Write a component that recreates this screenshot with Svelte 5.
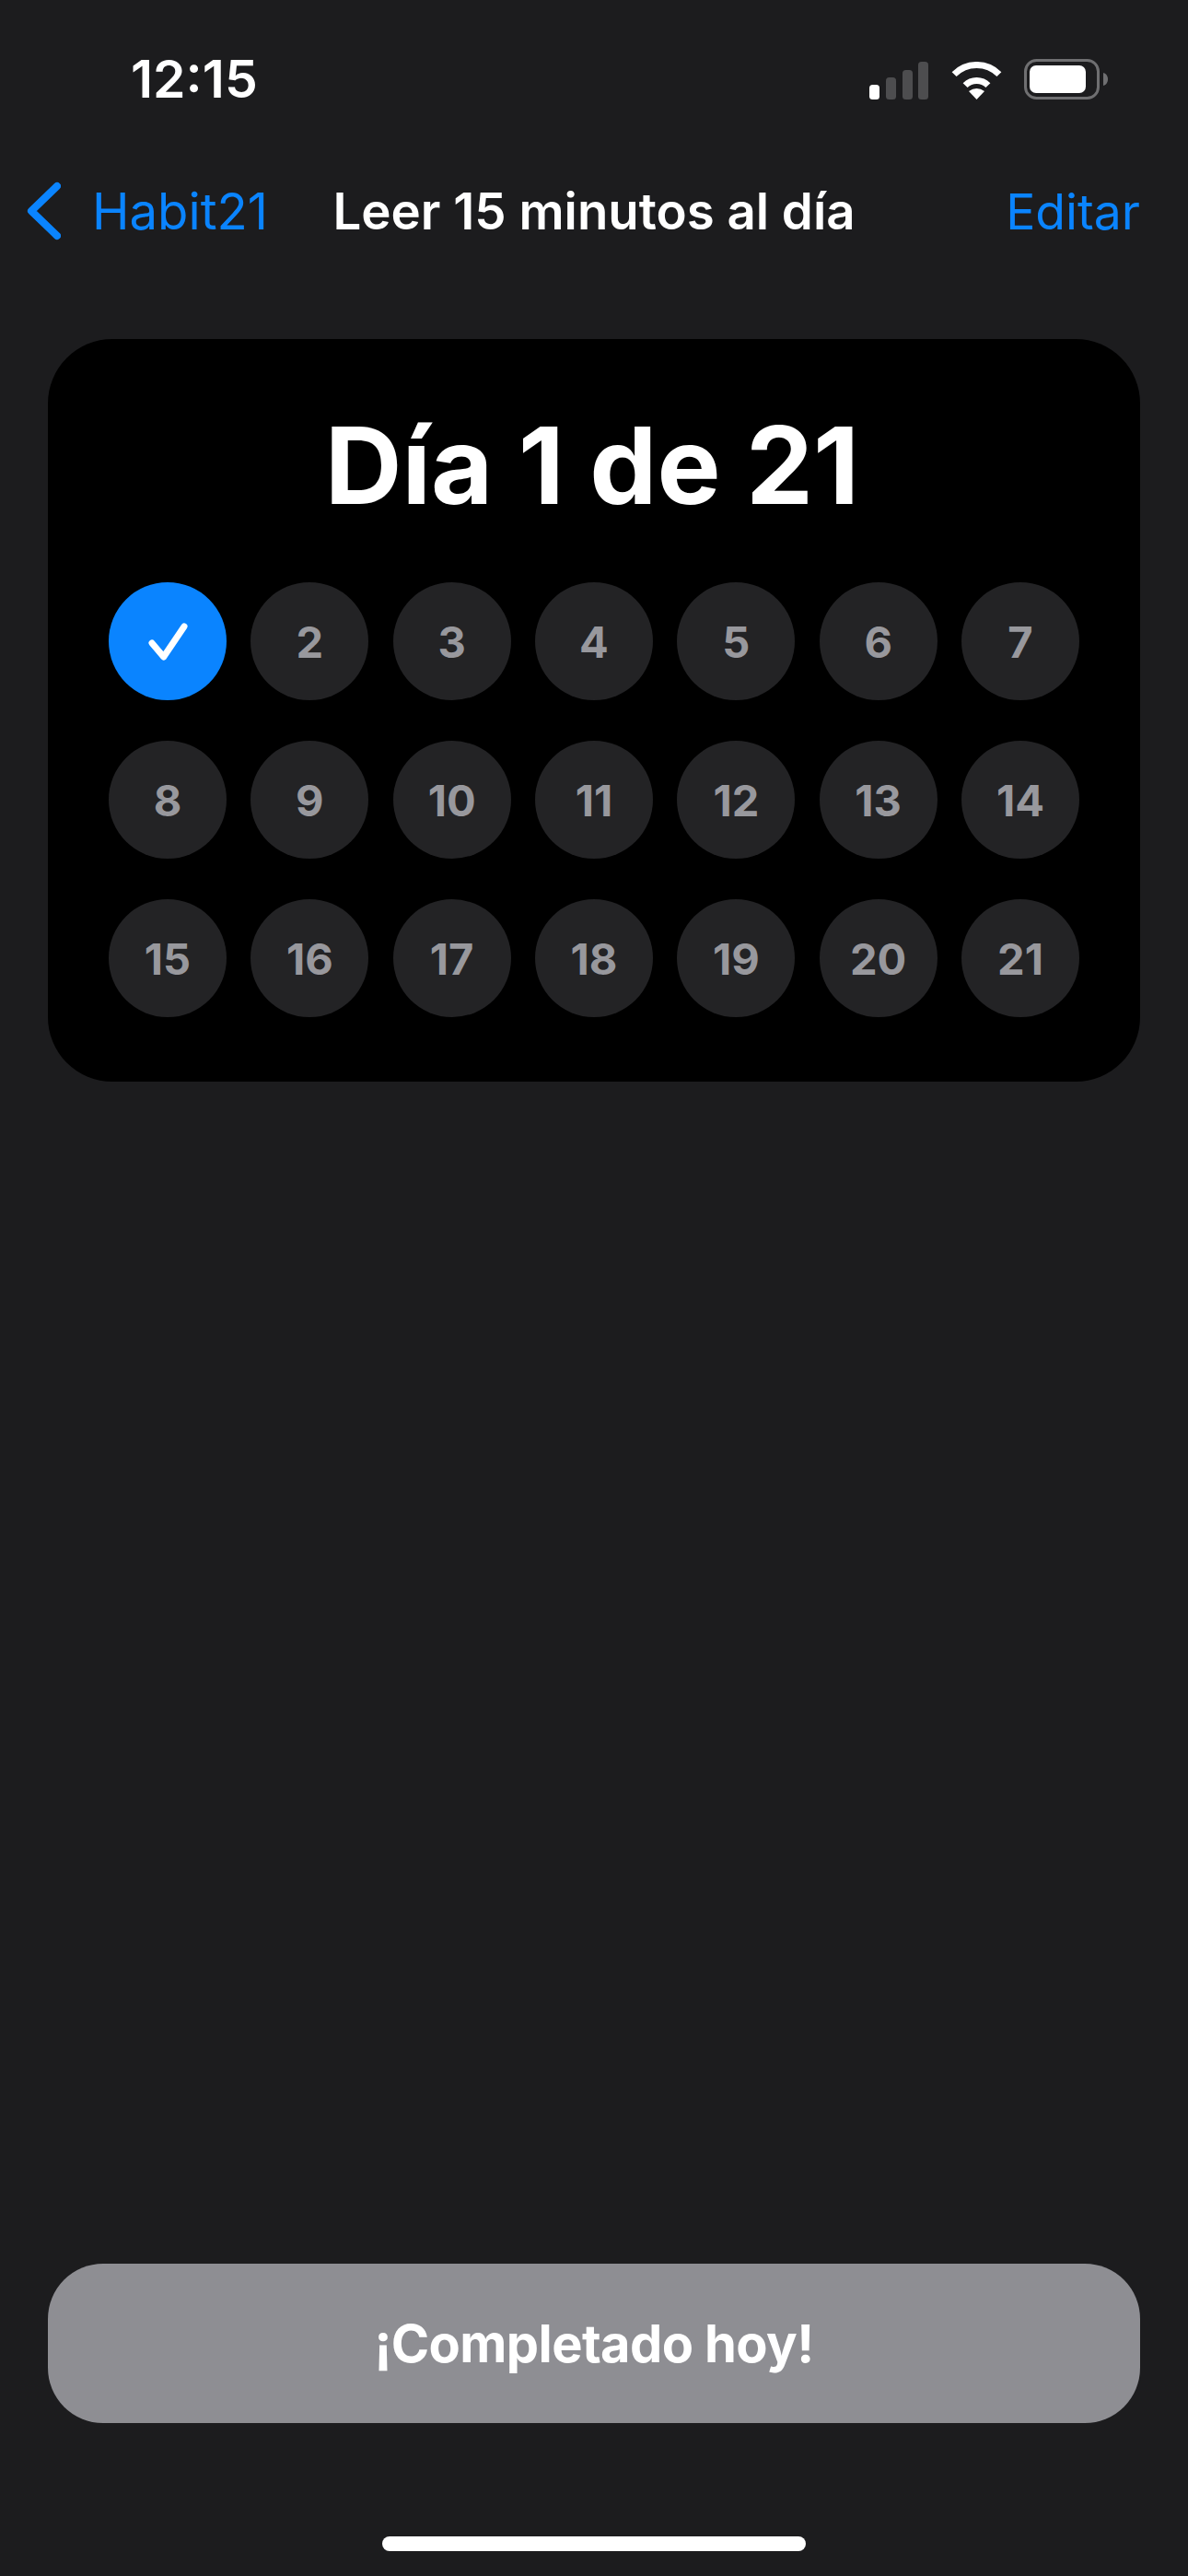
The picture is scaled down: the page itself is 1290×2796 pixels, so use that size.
<script>
  const days = Array.from({ length: 21 }, (_, i) => i + 1);
  let completed = 1;
</script>

<div class="screen">
  <div class="status">
    <span class="time">12:15</span>
    <div class="status-icons">
      <svg class="signal" width="64" height="41" viewBox="0 0 64 41">
        <rect x="0" y="25" width="11" height="16" rx="3.5" fill="#fff" />
        <rect x="18" y="17" width="11" height="24" rx="3.5" fill="#4d4d4f" />
        <rect x="36" y="9" width="11" height="32" rx="3.5" fill="#4d4d4f" />
        <rect x="53" y="0" width="11" height="41" rx="3.5" fill="#4d4d4f" />
      </svg>
      <svg class="wifi" width="55" height="41" viewBox="0 0 55 41">
        <path d="M3.1 13.6A34.5 34.5 0 0 1 51.9 13.6" fill="none" stroke="#fff" stroke-width="7" />
        <path d="M15.1 25.6A17.5 17.5 0 0 1 39.9 25.6" fill="none" stroke="#fff" stroke-width="7" />
        <path d="M27.5 41L19 32Q27.5 26 36 32Z" fill="#fff" />
      </svg>
      <svg class="battery" width="92" height="44" viewBox="0 0 92 44">
        <rect x="1.5" y="1.5" width="79" height="41" rx="12" fill="none" stroke="#6f6f71" stroke-width="3" />
        <rect x="6" y="7" width="61" height="30" rx="7" fill="#fff" />
        <path d="M86 15C89.5 16 91 19 91 22C91 25 89.5 28 86 29Z" fill="#6f6f71" />
      </svg>
    </div>
  </div>

  <nav class="nav">
    <a class="back" href="#back">
      <svg width="38" height="64" viewBox="0 0 38 64">
        <path d="M34 5L6 32L34 59" fill="none" stroke="#0a84ff" stroke-width="8" stroke-linecap="round" stroke-linejoin="round" />
      </svg>
      <span>Habit21</span>
    </a>
    <h1>Leer 15 minutos al día</h1>
    <a class="edit" href="#edit">Editar</a>
  </nav>

  <section class="card">
    <h2>Día 1 de 21</h2>
    <div class="days">
      {#each days as day}
        <div class="day" class:done={day <= completed}>
          {#if day <= completed}
            <svg width="48" height="44" viewBox="0 0 48 44">
              <path d="M7 24L19.7 39L42 6" fill="none" stroke="#fff" stroke-width="7" stroke-linecap="round" stroke-linejoin="round" />
            </svg>
          {:else}
            {day}
          {/if}
        </div>
      {/each}
    </div>
  </section>

  <div class="spacer"></div>

  <button class="complete" type="button">¡Completado hoy!</button>

  <div class="home-bar"></div>
</div>

<style>
  :global(body) {
    background: #1c1c1e;
  }

  .screen {
    width: 1290px;
    height: 2796px;
    box-sizing: border-box;
    background: #1c1c1e;
    color: #fff;
    font-family: Inter, "Liberation Sans", sans-serif;
    display: flex;
    flex-direction: column;
    overflow: hidden;
  }

  .status {
    height: 196px;
    flex: none;
    display: flex;
    justify-content: space-between;
    align-items: flex-start;
    padding: 0 86px 0 142px;
    box-sizing: border-box;
  }

  .time {
    margin-top: 52px;
    font-size: 57px;
    line-height: 68px;
    font-weight: 600;
  }

  .status-icons {
    display: flex;
    align-items: flex-end;
    margin-top: 64px;
  }

  .signal {
    margin-right: 25px;
  }

  .wifi {
    margin-right: 24px;
  }

  .nav {
    height: 64px;
    flex: none;
    display: grid;
    grid-template-columns: 1fr auto 1fr;
    align-items: center;
    padding: 0 28px;
    margin-bottom: 108px;
  }

  .back {
    display: flex;
    align-items: center;
    gap: 34px;
    color: #0a84ff;
    text-decoration: none;
    font-size: 54.5px;
  }

  .edit {
    justify-self: end;
    margin-right: 24px;
    color: #0a84ff;
    text-decoration: none;
    font-size: 53.5px;
  }

  h1 {
    margin: 0;
    font-size: 54.6px;
    font-weight: 600;
    line-height: 64px;
  }

  .card {
    flex: none;
    margin: 0 52px;
    height: 806px;
    box-sizing: border-box;
    background: #000;
    border-radius: 70px;
    padding: 68px 66px 0;
  }

  h2 {
    margin: 0 4px 58px 0;
    text-align: center;
    font-size: 116px;
    line-height: 138px;
    font-weight: 700;
  }

  .days {
    display: grid;
    grid-template-columns: repeat(7, 128px);
    justify-content: space-between;
    row-gap: 44px;
  }

  .day {
    width: 128px;
    height: 128px;
    border-radius: 50%;
    background: #232325;
    color: #98989d;
    font-size: 47px;
    font-weight: 700;
    display: flex;
    align-items: center;
    justify-content: center;
  }

  .day.done {
    background: #0a84ff;
  }

  .spacer {
    flex: 1;
  }

  .complete {
    flex: none;
    margin: 0 52px;
    height: 173px;
    border: none;
    border-radius: 60px;
    background: #8e8e93;
    color: #fff;
    font-family: inherit;
    font-size: 56px;
    font-weight: 700;
    letter-spacing: -0.6px;
  }

  .home-bar {
    flex: none;
    width: 460px;
    height: 16px;
    border-radius: 8px;
    background: #fff;
    margin: 123px auto 27px;
  }
</style>
